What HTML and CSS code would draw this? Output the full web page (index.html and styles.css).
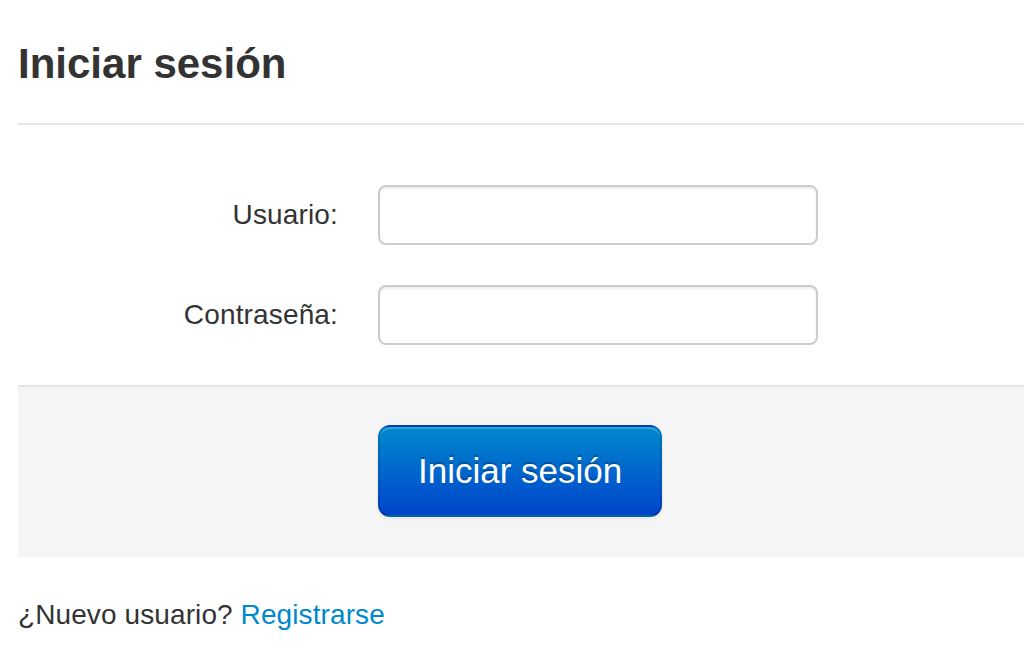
FILE: index.html
```html
<!DOCTYPE html>
<html lang="es">
<head>
<meta charset="utf-8">
<title>Iniciar sesión</title>
<link rel="stylesheet" href="styles.css">
</head>
<body>
<form class="login" action="#" onsubmit="return false;">
  <h1 class="page-title">Iniciar sesión</h1>
  <div class="fields">
    <div class="group">
      <label class="label" for="user">Usuario:</label>
      <input class="input" id="user" type="text">
    </div>
    <div class="group">
      <label class="label" for="pass">Contraseña:</label>
      <input class="input" id="pass" type="password">
    </div>
  </div>
  <div class="actions">
    <button class="btn-primary" type="submit">Iniciar sesión</button>
  </div>
</form>
<p class="signup">¿Nuevo usuario? <a class="link" href="#">Registrarse</a></p>
</body>
</html>
```
FILE: styles.css
```css
html, body {
  margin: 0;
  background: #fff;
}
body {
  padding-left: 18px;
  font-family: "Liberation Sans", Arial, Helvetica, sans-serif;
  font-size: 28px;
  line-height: 40px;
  color: #333;
  overflow: hidden;
}
.login {
  margin: 0;
}
.page-title {
  margin: 0;
  padding-top: 40px;
  height: 83px;
  font-size: 42px;
  font-weight: bold;
  line-height: normal;
  color: #333;
  border-bottom: 2px solid #e5e5e5;
}
.fields {
  padding-top: 60px;
}
.group {
  display: flex;
  align-items: flex-start;
  margin-bottom: 40px;
}
.label {
  width: 320px;
  box-sizing: border-box;
  padding-top: 10px;
  text-align: right;
  line-height: 40px;
  letter-spacing: 0.15px;
}
.input {
  margin: 0 0 0 40px;
  width: 440px;
  height: 60px;
  box-sizing: border-box;
  padding: 8px 12px;
  font-family: inherit;
  font-size: 28px;
  color: #555;
  background: #fff;
  border: 2px solid #ccc;
  border-radius: 8px;
  box-shadow: inset 0 2px 2px rgba(0, 0, 0, 0.075);
  outline: none;
}
.actions {
  border-top: 2px solid #e5e5e5;
  background: #f5f5f5;
  padding: 38px 0 40px 360px;
}
.btn-primary {
  display: block;
  height: 92px;
  padding: 0 38px;
  margin: 0;
  font-family: inherit;
  font-size: 35px;
  color: #fff;
  border: 2px solid;
  border-color: rgba(0, 0, 0, 0.1) rgba(0, 0, 0, 0.1) rgba(0, 0, 0, 0.25);
  border-radius: 12px;
  background: linear-gradient(#0088cc, #0044cc);
  box-shadow: inset 0 2px 0 rgba(255, 255, 255, 0.2), 0 2px 4px rgba(0, 0, 0, 0.05);
  text-shadow: 0 -2px 0 rgba(0, 0, 0, 0.25);
  cursor: pointer;
}
.signup {
  margin: 38px 0 0;
  letter-spacing: 0.1px;
}
.link {
  color: #0088cc;
  text-decoration: none;
}
```
